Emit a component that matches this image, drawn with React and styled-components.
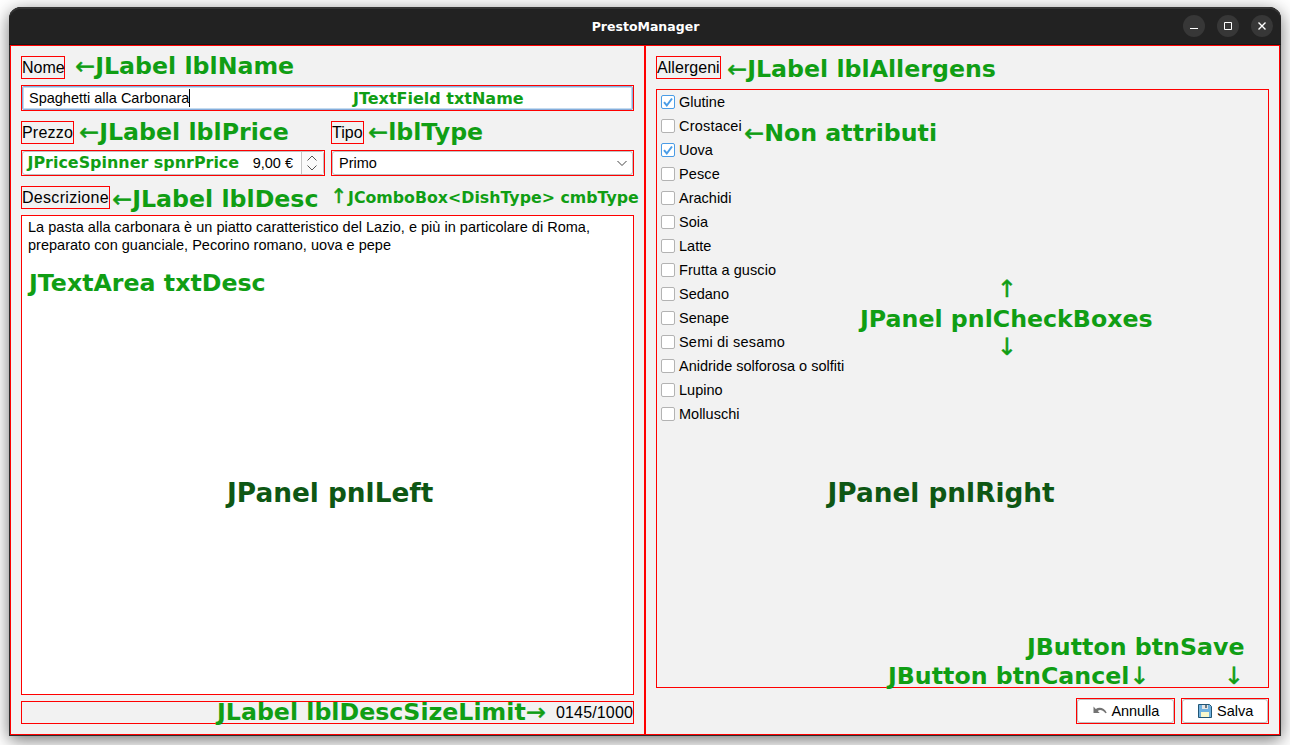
import React from "react";
import styled, { createGlobalStyle, css } from "styled-components";

const RED = "#ff0000";

const GlobalStyle = createGlobalStyle`
  * { box-sizing: border-box; }
  html, body { margin: 0; padding: 0; }
  body { background: #fff; overflow: hidden; color: #000; font-family: "Liberation Sans", Arial, sans-serif; }
`;

const Desktop = styled.div`
  position: relative;
  width: 1290px;
  height: 745px;
  overflow: hidden;
  padding: 7px 9px 9px;
`;

const Window = styled.main`
  display: flex;
  flex-direction: column;
  width: 1272px;
  height: 729px;
  padding: 0 1px 1px;
  background: #2c2c2c;
  border-radius: 12px 12px 0 0;
  box-shadow: 0 4px 17px rgba(0, 0, 0, 0.55);
`;

const TitleBar = styled.header`
  display: grid;
  grid-template-columns: 1fr auto 1fr;
  align-items: center;
  flex: 0 0 38px;
  margin: 0 -1px;
  padding: 0 8px 0 9px;
  border-radius: 12px 12px 0 0;
  background: #222;
  box-shadow: inset 0 2px #343434, inset 0 -1px #171717;
  color: #fff;
`;

const Title = styled.h1`
  grid-column: 2;
  margin: 2px 0 0;
  font: bold 12.5px/20px "DejaVu Sans", sans-serif;
`;

const WindowControls = styled.div`
  display: flex;
  justify-content: flex-end;
  gap: 12px;
`;

const ControlButton = styled.button`
  width: 22px;
  height: 22px;
  padding: 0;
  border: 0;
  border-radius: 50%;
  background: #373737;
  svg { display: block; }
`;

const Panels = styled.div`
  display: grid;
  grid-template-columns: 635px 635px;
  flex: 1;
`;

const Panel = styled.section`
  display: flex;
  flex-direction: column;
  align-items: stretch;
  min-height: 0;
  padding: 10px;
  border: 1px solid ${RED};
  background: #f2f2f2;
`;

const Label = styled.label`
  display: block;
  width: ${(p) => p.$w}px;
  height: 23px;
  border: 1px solid ${RED};
  font-size: 16px;
  line-height: 22px;
  letter-spacing: ${(p) => p.$ls || 0}px;
  white-space: nowrap;
  text-align: ${(p) => (p.$right ? "right" : "left")};
`;

const framed = css`
  height: 26px;
  border: 1px solid ${RED};
  background: #f2f2f2;
`;

const inner = css`
  display: flex;
  align-items: center;
  height: 24px;
  border: 1px solid #c0c0c0;
  border-radius: 3px;
  background: #fff;
  font-size: 14.5px;
  line-height: 20px;
  white-space: nowrap;
`;

const Framed = styled.div`${framed}`;

const FocusedField = styled.div`
  ${inner}
  padding-left: 6px;
  border: 1px solid #86aedb;
  border-radius: 2px;
  box-shadow: inset 0 0 0 1px #c3daf0;
`;

const Caret = styled.span`
  width: 1px;
  height: 18px;
  background: #000;
`;

const FieldRow = styled.div`
  display: grid;
  grid-template-columns: 304px 303px;
  column-gap: 6px;
  margin-bottom: 10px;
`;

const Field = styled.div`
  display: flex;
  flex-direction: column;
  gap: 6px;
  margin-bottom: ${(p) => p.$mb || 0}px;
`;

const Spinner = styled.div`
  ${inner}
  justify-content: flex-end;
`;

const SpinnerArrows = styled.span`
  display: flex;
  align-items: center;
  justify-content: center;
  width: 22px;
  height: 22px;
  margin-left: 8px;
  padding-right: 1px;
  border-left: 1px solid #c4c4c4;
  background: #fafafa;
`;

const Combo = styled.div`
  ${inner}
  justify-content: space-between;
  padding: 0 5px 0 6px;
`;

const TextArea = styled.div`
  flex: 1;
  margin: 6px 0;
  padding: 2px 6px;
  border: 1px solid ${RED};
  background: #fff;
  font-size: 14.5px;
  line-height: 18px;
  letter-spacing: 0.02px;
  white-space: pre;
`;

const CheckBoxes = styled.ul`
  flex: 1;
  margin: 10px 0;
  padding: 0 0 0 4px;
  border: 1px solid ${RED};
  list-style: none;
`;

const CheckItem = styled.li`
  display: flex;
  align-items: center;
  gap: 4px;
  height: 24px;
  font-size: 14.5px;
  letter-spacing: ${(p) => p.$ls || 0}px;
`;

const CheckMark = styled.span`
  width: 14px;
  height: 14px;
  border: 1px solid ${(p) => (p.$on ? "#4a9ce6" : "#b3b3b3")};
  border-radius: 2px;
  background: #fff;
  svg { display: block; }
`;

const Actions = styled.footer`
  display: flex;
  justify-content: flex-end;
  gap: 6px;
`;

const ActionFrame = styled.div`
  ${framed}
  width: ${(p) => p.$w}px;
`;

const ActionButton = styled.button`
  ${inner}
  width: 100%;
  padding: 0 0 0 ${(p) => p.$pad}px;
  gap: 5px;
  color: #000;
  font-family: inherit;
  letter-spacing: ${(p) => p.$ls || 0}px;
  svg { display: block; flex: none; }
`;

const Note = styled.span`
  position: absolute;
  left: ${(p) => p.$x}px;
  top: ${(p) => p.$y - Math.round((p.$size || 23.7) * 0.928)}px;
  color: ${(p) => (p.$dark ? "#0e5714" : "#109e14")};
  font-family: "DejaVu Sans", sans-serif;
  font-weight: bold;
  font-size: ${(p) => p.$size || 23.7}px;
  line-height: normal;
  white-space: pre;
  pointer-events: none;
`;

const Arrow = styled.span`
  font-weight: normal;
  -webkit-text-stroke: 0.5px currentColor;
`;

const allergens = [
  ["Glutine", true], ["Crostacei", false, 0.2], ["Uova", true], ["Pesce", false, 0.1], ["Arachidi"], ["Soia"], ["Latte"],
  ["Frutta a guscio", false, 0.08], ["Sedano"], ["Senape"], ["Semi di sesamo", false, 0.2],
  ["Anidride solforosa o solfiti"], ["Lupino"], ["Molluschi"],
];

const notes = [
  { x: 75.3, y: 74, text: "←JLabel lblName" },
  { x: 353, y: 104, size: 16, text: "JTextField txtName" },
  { x: 79.3, y: 140, text: "←JLabel lblPrice" },
  { x: 368.3, y: 140, text: "←lblType" },
  { x: 27.5, y: 168, size: 15.93, text: "JPriceSpinner spnrPrice" },
  { x: 112.3, y: 207, text: "←JLabel lblDesc" },
  { x: 330.5, y: 203, size: 20, text: "↑" },
  { x: 348, y: 203, size: 15.8, text: "JComboBox<DishType> cmbType" },
  { x: 29, y: 291, text: "JTextArea txtDesc" },
  { x: 227, y: 502, size: 26.35, dark: true, text: "JPanel pnlLeft" },
  { x: 217, y: 720, text: "JLabel lblDescSizeLimit→" },
  { x: 727.3, y: 77, text: "←JLabel lblAllergens" },
  { x: 744.3, y: 141, text: "←Non attributi" },
  { x: 997, y: 297, text: "↑" },
  { x: 860, y: 327, text: "JPanel pnlCheckBoxes" },
  { x: 997, y: 355, text: "↓" },
  { x: 827.5, y: 502, size: 26.35, dark: true, text: "JPanel pnlRight" },
  { x: 1027, y: 655, text: "JButton btnSave" },
  { x: 888, y: 684, text: "JButton btnCancel↓" },
  { x: 1224, y: 684, text: "↓" },
];

const UndoIcon = () => (
  <svg width="14" height="14" viewBox="0 0 14 14">
    <path d="M.5 2.500V9h6.200L4.700 7C7 5.200 9.500 6 12.500 9.200l1.200-.5C11.500 4 6.500 2.500 2.800 5z" fill="#737373" />
  </svg>
);

const SaveIcon = () => (
  <svg width="14" height="14" viewBox="0 0 14 14">
    <path d="M.5.5h11l2 2v11H.5z" fill="#70b1df" stroke="#225675" />
    <path d="M4 1h6v4H4z" fill="#e5e5e5" />
    <path d="M7 1h2v3H7z" fill="#667985" />
    <path d="M3 8h8v5H3z" fill="#fbf8cb" />
  </svg>
);

const renderNote = (text) =>
  text.split(/([←↑→↓])/).map((part, i) => (/[←↑→↓]/.test(part) ? <Arrow key={i}>{part}</Arrow> : part));

export default function App() {
  return (
    <Desktop>
      <GlobalStyle />
      <Window>
        <TitleBar>
          <Title>PrestoManager</Title>
          <WindowControls>
            <ControlButton aria-label="Minimize">
              <svg width="22" height="22"><path d="M7 13.5h8" stroke="#fff" /></svg>
            </ControlButton>
            <ControlButton aria-label="Maximize">
              <svg width="22" height="22"><path d="M7.5 7.5h7v7h-7z" fill="none" stroke="#fff" /></svg>
            </ControlButton>
            <ControlButton aria-label="Close">
              <svg width="22" height="22"><path d="M7.5 7.5l7 7m0-7l-7 7" stroke="#fff" strokeWidth="1.4" /></svg>
            </ControlButton>
          </WindowControls>
        </TitleBar>
        <Panels>
          <Panel>
            <Field $mb={10}>
              <Label $w={44}>Nome</Label>
              <Framed>
                <FocusedField>Spaghetti alla Carbonara<Caret /></FocusedField>
              </Framed>
            </Field>
            <FieldRow>
              <Field>
                <Label $w={53} $ls={0.2}>Prezzo</Label>
                <Framed>
                  <Spinner>
                    9,00 €
                    <SpinnerArrows>
                      <svg width="12" height="18" fill="none" stroke="#555">
                        <path d="M1.500 6.500L6 2l4.500 4.500M1.500 11.500L6 16l4.500-4.500" />
                      </svg>
                    </SpinnerArrows>
                  </Spinner>
                </Framed>
              </Field>
              <Field>
                <Label $w={33}>Tipo</Label>
                <Framed>
                  <Combo>
                    Primo
                    <svg width="10" height="7" fill="none" stroke="#444"><path d="M.5 1L5 5.500 9.500 1" /></svg>
                  </Combo>
                </Framed>
              </Field>
            </FieldRow>
            <Label $w={89} $ls={0.3}>Descrizione</Label>
            <TextArea>
              {"La pasta alla carbonara è un piatto caratteristico del Lazio, e più in particolare di Roma,\npreparato con guanciale, Pecorino romano, uova e pepe"}
            </TextArea>
            <Label $w={613} $ls={0.15} $right>0145/1000</Label>
          </Panel>
          <Panel>
            <Label $w={65} $ls={0.05}>Allergeni</Label>
            <CheckBoxes>
              {allergens.map(([name, on, ls]) => (
                <CheckItem key={name} $ls={ls}>
                  <CheckMark $on={on}>
                    {on && (
                      <svg width="12" height="12"><path d="M2 6.200l2.800 3.300L10 2.500" fill="none" stroke="#4a9ce6" strokeWidth="2" /></svg>
                    )}
                  </CheckMark>
                  {name}
                </CheckItem>
              ))}
            </CheckBoxes>
            <Actions>
              <ActionFrame $w={99}><ActionButton $pad={14.5} $ls={-0.1}><UndoIcon />Annulla</ActionButton></ActionFrame>
              <ActionFrame $w={88}><ActionButton $pad={15}><SaveIcon />Salva</ActionButton></ActionFrame>
            </Actions>
          </Panel>
        </Panels>
      </Window>
      {notes.map((n, i) => (
        <Note key={i} $x={n.x} $y={n.y} $size={n.size} $dark={n.dark}>{renderNote(n.text)}</Note>
      ))}
    </Desktop>
  );
}
